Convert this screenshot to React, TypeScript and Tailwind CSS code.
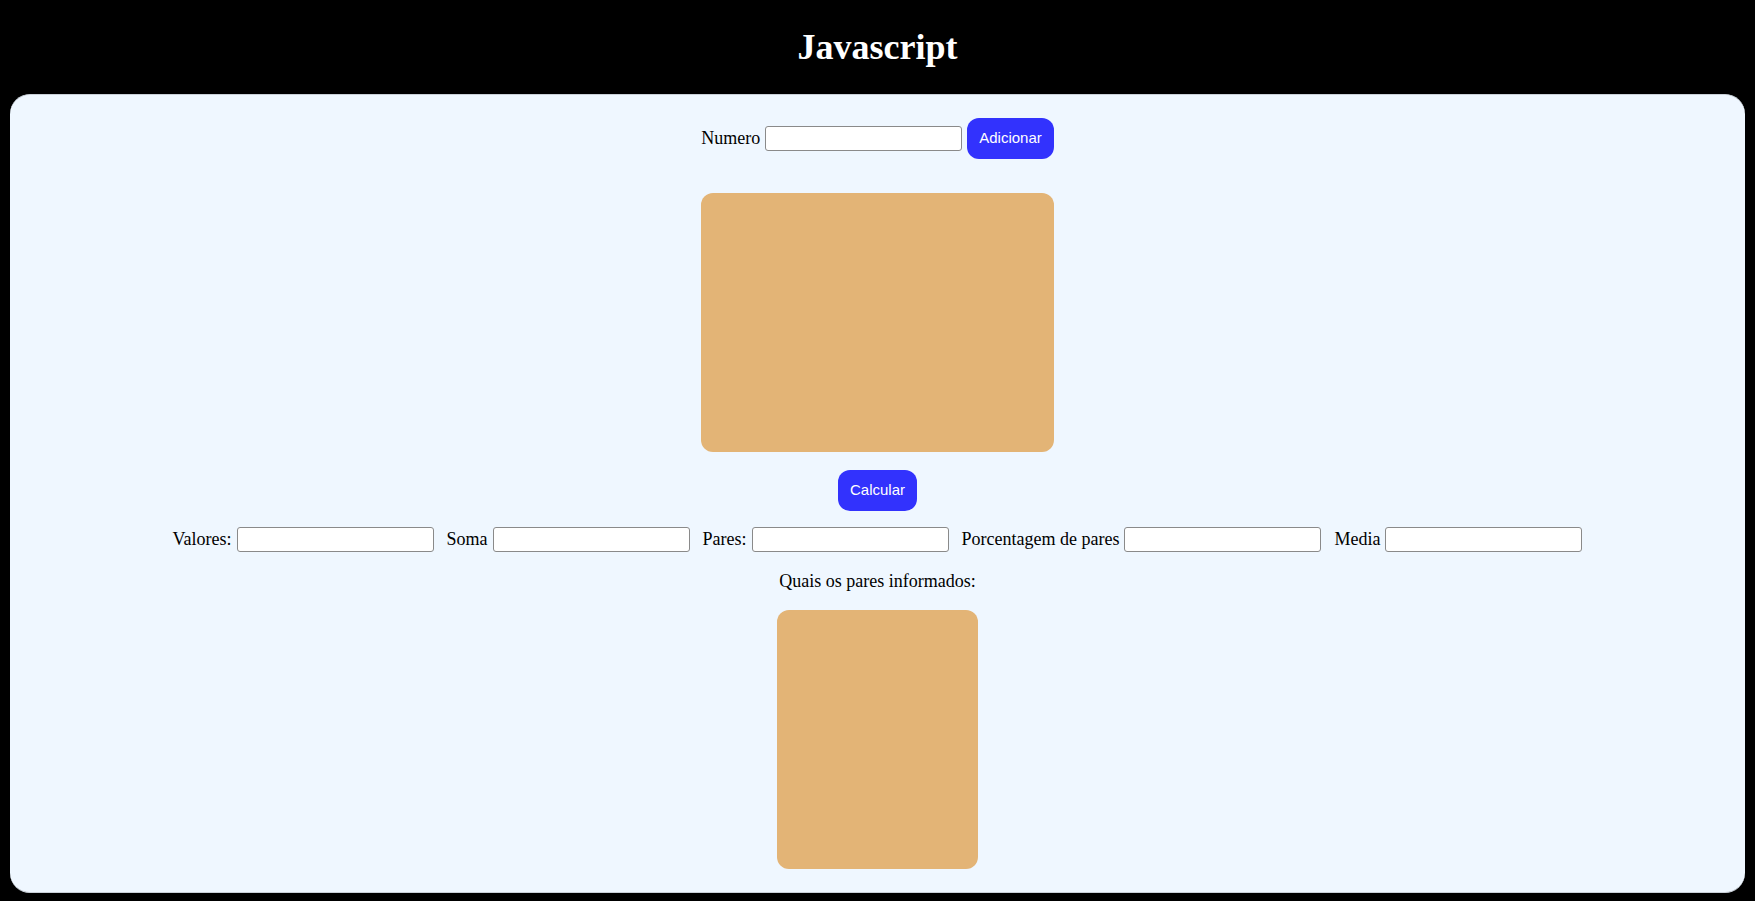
import React from 'react';

const serif = { fontFamily: '"Liberation Serif", "Times New Roman", serif' };

function Field({ label }: { label: string }) {
  return (
    <div className="flex items-center gap-[5px]">
      <label className="text-[18px] leading-[21px] text-black">{label}</label>
      <input
        type="text"
        className="w-[197px] h-[25px] bg-white border border-[#8a8a8a] rounded-[3px] outline-none px-1"
      />
    </div>
  );
}

function BlueButton({ children }: { children: React.ReactNode }) {
  return (
    <button
      className="h-[41px] px-[12px] rounded-[12px] bg-[#3232fd] text-white text-[15px]"
      style={{ fontFamily: '"Liberation Sans", Arial, sans-serif' }}
    >
      {children}
    </button>
  );
}

export default function App() {
  return (
    <div className="min-h-screen bg-black pb-[9px]" style={serif}>
      <header className="h-[94px] pt-[27px] text-center">
        <h1 className="text-[36px] leading-[41px] font-bold text-white">Javascript</h1>
      </header>

      <main className="mx-[10px] rounded-[20px] bg-[#eff7ff] border-t border-b border-[#c9d0d8] pt-[22px] pb-[23px] flex flex-col items-center">
        <div className="flex items-center gap-[5px] h-[42px]">
          <label className="text-[18px] leading-[21px] text-black">Numero</label>
          <input
            type="text"
            className="w-[197px] h-[25px] bg-white border border-[#8a8a8a] rounded-[3px] outline-none px-1"
          />
          <BlueButton>Adicionar</BlueButton>
        </div>

        <div className="mt-[34px] w-[353px] h-[259px] rounded-[12px] bg-[#e3b476]" />

        <div className="mt-[18px]">
          <BlueButton>Calcular</BlueButton>
        </div>

        <div className="mt-[16px] flex items-center justify-center gap-[13px]">
          <Field label="Valores:" />
          <Field label="Soma" />
          <Field label="Pares:" />
          <Field label="Porcentagem de pares" />
          <Field label="Media" />
        </div>

        <p className="mt-[19px] text-[18px] leading-[21px] text-black">Quais os pares informados:</p>

        <div className="mt-[18px] w-[201px] h-[259px] rounded-[12px] bg-[#e3b476]" />
      </main>
    </div>
  );
}
